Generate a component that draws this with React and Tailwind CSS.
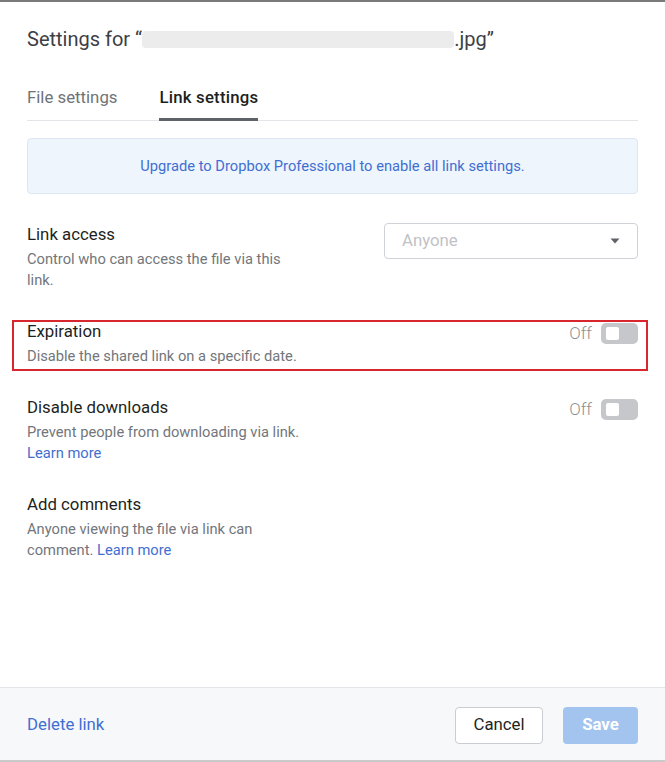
import React from 'react';

const font = { fontFamily: 'Roboto, "Liberation Sans", sans-serif' };

const Toggle = () => (
  <div className="flex items-center gap-[9px]">
    <span className="text-[17px] font-light text-[#8d8f93]">Off</span>
    <div className="w-[37px] h-[21px] rounded-[5px] bg-[#c5c7ca] flex items-center pl-[5px]">
      <div className="w-[13px] h-[13px] rounded-[2px] bg-white" />
    </div>
  </div>
);

export default function App() {
  return (
    <div
      className="w-[665px] h-[762px] bg-white flex flex-col border-t-2 border-b-2 border-t-[#7b7b7b] border-b-[#c9c9c9]"
      style={font}
    >
      {/* Header */}
      <div className="px-[27px] pt-[23px]">
        <h1 className="text-[20px] leading-[28px] text-[#3d4045] flex items-center">
          <span>Settings for “</span>
          <span className="inline-block w-[312px] h-[17px] bg-[#ececec] rounded-sm" />
          <span>.jpg”</span>
        </h1>

        {/* Tabs */}
        <div className="mt-[32px] flex gap-[42px] border-b border-[#e3e5e8]">
          <button className="pb-[10px] text-[16.8px] leading-[25px] text-[#6f7378]">File settings</button>
          <button className="pb-[8px] -mb-px border-b-[3px] border-[#5f6368] text-[16.8px] leading-[25px] font-medium tracking-[0.2px] text-[#1e1f21]">
            Link settings
          </button>
        </div>

        {/* Upgrade banner */}
        <div className="mt-[17px] h-[56px] rounded-[4px] bg-[#eef5fd] border border-[#dde7f1] flex items-center justify-center">
          <span className="text-[14.7px] text-[#3f6fd1]">
            Upgrade to Dropbox Professional to enable all link settings.
          </span>
        </div>
      </div>

      {/* Settings */}
      <div className="flex-1 px-[27px] pt-[28px] flex flex-col gap-[28px]">
        <div className="flex justify-between items-start">
          <div>
            <div className="text-[16.8px] leading-[24px] text-[#1e1f21]">Link access</div>
            <div className="mt-[3px] text-[14.7px] leading-[21px] text-[#72767b]">
              Control who can access the file via this
              <br />
              link.
            </div>
          </div>
          <div className="mt-px w-[254px] h-[36px] border border-[#cfd2d6] rounded-[4px] flex items-center justify-between pl-[17px] pr-[17px]">
            <span className="text-[16.8px] text-[#bfc2c6]">Anyone</span>
            <svg width="10" height="6" viewBox="0 0 10 6">
              <path d="M0.5 0.5 L9.5 0.5 L5 5.5 Z" fill="#5f6368" />
            </svg>
          </div>
        </div>

        <div className="relative flex justify-between items-start">
          <div>
            <div className="text-[16.8px] leading-[24px] text-[#1e1f21]">Expiration</div>
            <div className="mt-[3px] text-[14.7px] leading-[21px] text-[#72767b]">
              Disable the shared link on a specific date.
            </div>
          </div>
          <div className="pt-[2px]">
            <Toggle />
          </div>
          <div className="absolute left-[-15px] right-[-10px] top-[1px] h-[51px] border-2 border-[#d7262e] pointer-events-none" />
        </div>

        <div className="flex justify-between items-start">
          <div>
            <div className="text-[16.8px] leading-[24px] text-[#1e1f21]">Disable downloads</div>
            <div className="mt-[3px] text-[14.7px] leading-[21px] text-[#72767b]">
              Prevent people from downloading via link.
              <br />
              <a className="text-[#3f6fd1]">Learn more</a>
            </div>
          </div>
          <div className="pt-[2px]">
            <Toggle />
          </div>
        </div>

        <div>
          <div className="text-[16.8px] leading-[24px] text-[#1e1f21]">Add comments</div>
          <div className="mt-[3px] text-[14.7px] leading-[21px] text-[#72767b]">
            Anyone viewing the file via link can
            <br />
            comment. <a className="text-[#3f6fd1]">Learn more</a>
          </div>
        </div>
      </div>

      {/* Footer */}
      <div className="h-[73px] border-t border-[#e3e5e8] bg-[#f7f8fa] px-[27px] pt-[2px] flex items-center justify-between">
        <a className="text-[16.8px] text-[#3f6fd1]">Delete link</a>
        <div className="flex gap-[20px]">
          <button className="w-[88px] h-[37px] bg-white border border-[#c9ccd0] rounded-[4px] text-[16.8px] text-[#1e1f21]">
            Cancel
          </button>
          <button className="w-[75px] h-[37px] bg-[#a2c4ef] rounded-[4px] text-[16.8px] font-bold text-white">
            Save
          </button>
        </div>
      </div>
    </div>
  );
}
